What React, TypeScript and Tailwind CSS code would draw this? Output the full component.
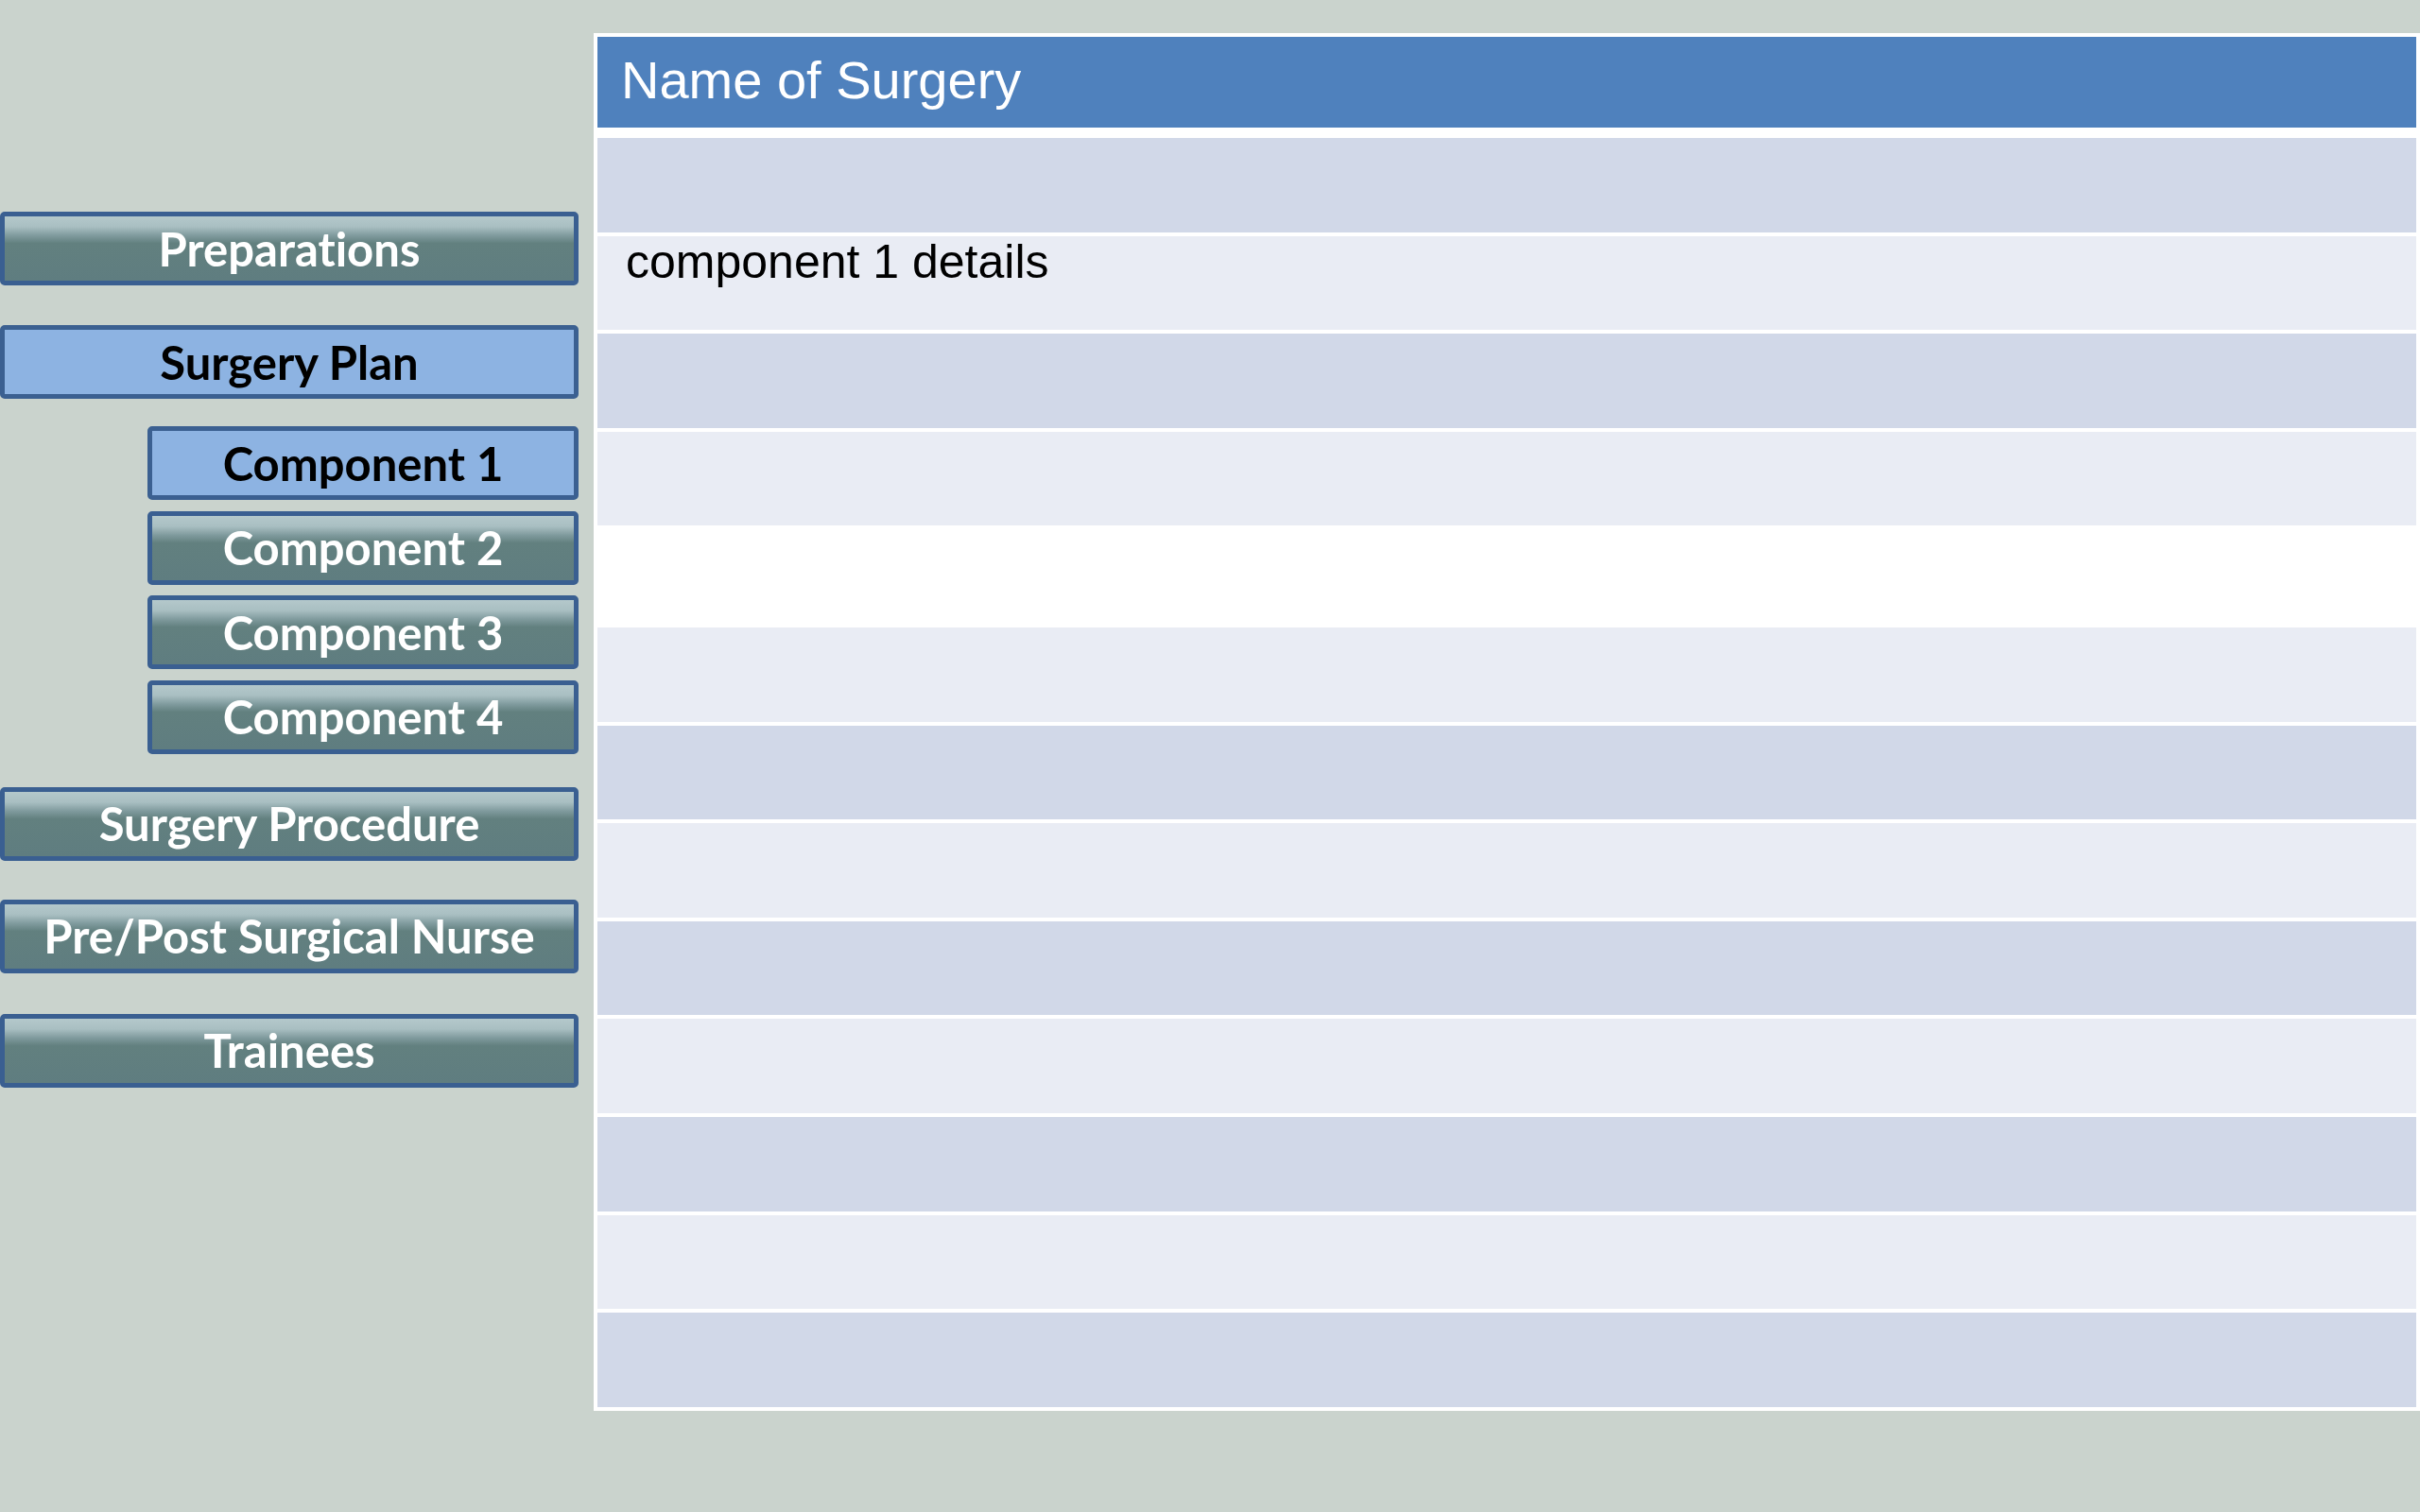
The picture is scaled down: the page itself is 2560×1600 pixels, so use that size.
import React from "react";

const navFont = { fontFamily: "Lato, 'Open Sans', sans-serif" };

function NavButton({
  label,
  active = false,
  className = "",
}: {
  label: string;
  active?: boolean;
  className?: string;
}) {
  return (
    <div
      className={
        "flex h-[78px] items-center justify-center rounded-[5px] border-[5px] " +
        (active
          ? "border-[#3b6091] bg-[#8db3e2] text-black"
          : "border-[#3a5f91] bg-[linear-gradient(to_bottom,#b4c8cb_0%,#a9bfc2_16%,#7f9a9d_30%,#62807f_42%,#5f7d80_100%)] text-white") +
        " " +
        className
      }
    >
      <span
        className="text-[49px] font-bold leading-none whitespace-nowrap [font-variant-ligatures:none]"
        style={navFont}
      >
        {label}
      </span>
    </div>
  );
}

const rowColors = [
  "bg-[#d1d8e8]",
  "bg-[#e9ecf4]",
  "bg-[#d1d8e8]",
  "bg-[#e9ecf4]",
  "bg-white",
  "bg-[#e9ecf4]",
  "bg-[#d1d8e8]",
  "bg-[#e9ecf4]",
  "bg-[#d1d8e8]",
  "bg-[#e9ecf4]",
  "bg-[#d1d8e8]",
  "bg-[#e9ecf4]",
  "bg-[#d1d8e8]",
];

export default function App() {
  return (
    <div className="flex h-[1600px] w-[2560px] overflow-hidden bg-[#cad3cd]">
      {/* Sidebar */}
      <div className="flex w-[612px] shrink-0 flex-col pt-[224px]">
        <NavButton label="Preparations" />
        <NavButton label="Surgery Plan" active className="mt-[42px]" />
        <div className="mt-[29px] ml-[156px] flex flex-col gap-[11.5px]">
          <NavButton label="Component 1" active />
          <NavButton label="Component 2" />
          <NavButton label="Component 3" />
          <NavButton label="Component 4" />
        </div>
        <NavButton label="Surgery Procedure" className="mt-[35px]" />
        <NavButton label="Pre/Post Surgical Nurse" className="mt-[41px]" />
        <NavButton label="Trainees" className="mt-[43px]" />
      </div>

      {/* Table */}
      <div className="mt-[35px] ml-[16px] flex h-[1458px] w-[1932px] shrink-0 flex-col bg-white p-[4px]">
        <div className="flex h-[96px] shrink-0 items-center bg-[#4f81bd] pb-[5px] pl-[25px]">
          <span
            className="text-[56px] leading-none text-white"
            style={{ fontFamily: "'Liberation Sans', Arial, sans-serif" }}
          >
            Name of Surgery
          </span>
        </div>
        <div className="mt-[11px] flex flex-1 flex-col gap-[4px]">
          {rowColors.map((c, i) => (
            <div key={i} className={"flex-1 " + c}>
              {i === 1 && (
                <div
                  className="pt-[2px] pl-[30px] text-[50px] leading-none text-black"
                  style={{ fontFamily: "'Liberation Sans', Arial, sans-serif" }}
                >
                  component 1 details
                </div>
              )}
            </div>
          ))}
        </div>
      </div>
    </div>
  );
}
